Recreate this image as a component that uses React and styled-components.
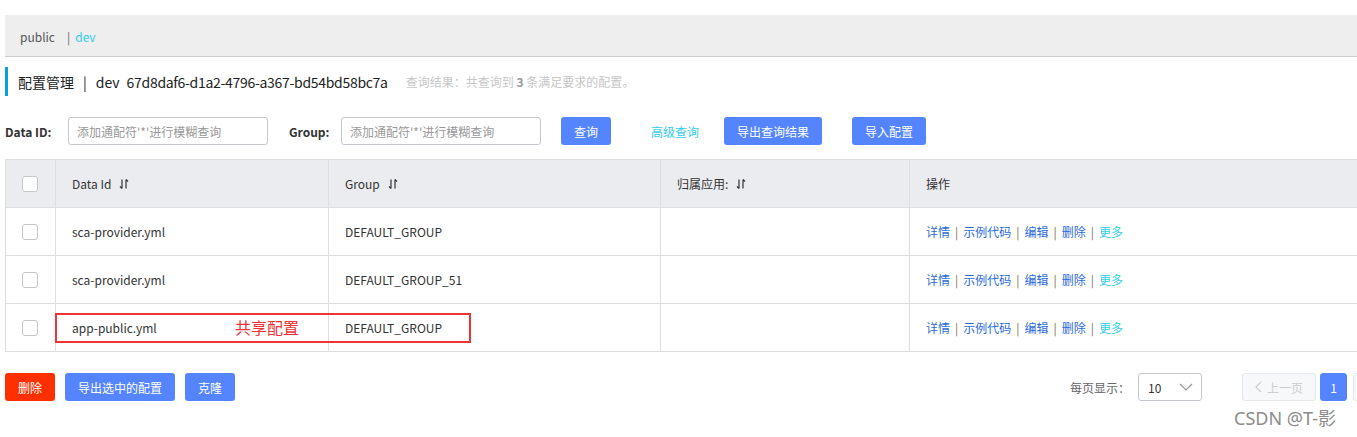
import React from "react";
import styled, { createGlobalStyle } from "styled-components";

const GlobalStyle = createGlobalStyle`
  html, body {
    margin: 0;
    padding: 0;
    background: #fff;
  }
  body {
    font-family: "Noto Sans CJK SC", "Noto Sans", sans-serif;
    font-size: 12px;
    color: #333;
    overflow: hidden;
  }
  * { box-sizing: border-box; }
`;

const colors = {
  primary: "#5584ff",
  cyan: "#33cde5",
  link: "#2a6bd6",
  border: "#dcdee3",
  inputBorder: "#c4c6cf",
  headBg: "#ebecf0",
  danger: "#ff3000",
};

const Viewport = styled.div`
  width: 1357px;
  height: 437px;
  overflow: hidden;
  position: relative;
`;

const Page = styled.div`
  width: 1422px;
  margin-left: 5px;
  padding-top: 15px;
`;

const NamespaceBar = styled.div`
  height: 42px;
  background: #eeeeee;
  border-bottom: 1px solid #cccccc;
  display: flex;
  align-items: center;
  padding-left: 15px;
  padding-top: 2px;
  font-size: 12px;
  line-height: 16px;
`;

const NsItem = styled.span`
  color: ${(p) => (p.active ? colors.cyan : "#555")};
`;

const NsSep = styled.span`
  color: #666;
  margin: 0 5px 0 12px;
`;

const TitleBar = styled.div`
  margin-top: 10px;
  height: 29px;
  border-left: 3px solid #0a9fd6;
  padding-left: 10px;
  display: flex;
  align-items: center;
  font-size: 14px;
  color: #222;
  line-height: 18px;
`;

const TitleSep = styled.span`
  margin: 0 9px;
`;

const NsId = styled.span`
  margin-left: 7px;
  letter-spacing: -0.3px;
`;

const Summary = styled.span`
  margin-left: 18px;
  font-size: 12px;
  color: #c6c6c6;
  strong {
    color: #999;
    font-weight: bold;
  }
`;

const SearchRow = styled.div`
  margin-top: 21px;
  height: 28px;
  display: flex;
  align-items: center;
`;

const FieldLabel = styled.label`
  width: ${(p) => p.w}px;
  flex: none;
  font-weight: bold;
  font-size: 12px;
  color: #333;
  margin-left: ${(p) => p.gap || 0}px;
`;

const TextInput = styled.input`
  width: 200px;
  height: 28px;
  border: 1px solid ${colors.inputBorder};
  border-radius: 3px;
  padding: 0 8px;
  font-family: inherit;
  font-size: 12px;
  outline: none;
  &::placeholder {
    color: #999;
  }
`;

const Button = styled.button`
  height: 28px;
  width: ${(p) => p.w}px;
  margin-left: ${(p) => p.gap || 0}px;
  border: none;
  border-radius: 3px;
  background: ${(p) => p.bg || colors.primary};
  color: #fff;
  font-family: inherit;
  font-size: 12px;
  padding: 0;
  cursor: pointer;
`;

const TextLink = styled.a`
  margin-left: ${(p) => p.gap || 0}px;
  color: ${colors.cyan};
  font-size: 12px;
  cursor: pointer;
`;

const TableWrap = styled.div`
  position: relative;
  margin-top: 14px;
`;

const Table = styled.table`
  width: 1360px;
  border-collapse: collapse;
  table-layout: fixed;
  font-size: 12px;
  th, td {
    border: 1px solid ${colors.border};
    height: 48px;
    padding: 0 16px;
    text-align: left;
    font-weight: normal;
    color: #333;
    white-space: nowrap;
  }
  th {
    background: ${colors.headBg};
  }
`;

const CheckCell = styled.td`
  && { padding: 0 0 0 16px; }
`;

const CheckHead = styled.th`
  && { padding: 0 0 0 16px; }
`;

const Checkbox = styled.span`
  display: block;
  width: 16px;
  height: 16px;
  border: 1px solid ${colors.inputBorder};
  border-radius: 3px;
  background: #fff;
`;

const HeadInner = styled.span`
  display: inline-flex;
  align-items: center;
  gap: 8px;
`;

const SortIcon = () => (
  <svg width="10" height="12" viewBox="0 0 10 12" fill="none" stroke="#333" strokeWidth="1.2">
    <path d="M3 1.5v9M1 8.5l2 2" />
    <path d="M7 10.5v-9M7 1.5l2 2" />
  </svg>
);

const Actions = styled.div`
  display: flex;
  align-items: center;
`;

const ActionLink = styled.a`
  color: ${(p) => (p.more ? colors.cyan : colors.link)};
  cursor: pointer;
`;

const ActionSep = styled.span`
  color: #8a6d4a;
  margin: 0 5px;
`;

const Annotation = styled.div`
  position: absolute;
  left: 50px;
  top: 154px;
  width: 416px;
  height: 30px;
  border: 2px solid #ee3338;
  pointer-events: none;
`;

const AnnotationText = styled.span`
  position: absolute;
  left: 178px;
  top: 2px;
  font-size: 16px;
  line-height: 20px;
  color: #ee3338;
`;

const Footer = styled.div`
  margin-top: 21px;
  height: 28px;
  display: flex;
  align-items: center;
`;

const Spacer = styled.div`
  flex: 1;
`;

const PageSizeLabel = styled.span`
  color: #666;
  margin-right: 8px;
`;

const Select = styled.div`
  width: 64px;
  height: 28px;
  border: 1px solid ${colors.inputBorder};
  border-radius: 3px;
  display: flex;
  align-items: center;
  justify-content: space-between;
  padding: 0 8px 0 9px;
  color: #333;
`;

const PageButton = styled.button`
  height: 28px;
  width: ${(p) => p.w}px;
  margin-left: ${(p) => p.gap || 0}px;
  border: 1px solid ${(p) => (p.current ? colors.primary : "#e6e7eb")};
  border-radius: 3px;
  background: ${(p) => (p.current ? colors.primary : "#f7f8fa")};
  color: ${(p) => (p.current ? "#fff" : "#ccc")};
  font-family: inherit;
  font-size: 12px;
  display: inline-flex;
  align-items: center;
  justify-content: center;
  gap: 5px;
  padding: 0;
`;

const Watermark = styled.div`
  position: absolute;
  left: 1234px;
  top: 407px;
  font-size: 18px;
  line-height: 22px;
  color: #8c8c8c;
  font-family: "Noto Sans", "Noto Sans CJK SC", sans-serif;
`;

const Chevron = ({ dir = "down", color = "#999" }) =>
  dir === "down" ? (
    <svg width="14" height="8" viewBox="0 0 14 8" fill="none" stroke={color} strokeWidth="1.2">
      <path d="M1 1l6 6 6-6" />
    </svg>
  ) : (
    <svg width="7" height="12" viewBox="0 0 7 12" fill="none" stroke={color} strokeWidth="1.2">
      <path d="M6 1L1 6l5 5" />
    </svg>
  );

const rows = [
  { id: "sca-provider.yml", group: "DEFAULT_GROUP" },
  { id: "sca-provider.yml", group: "DEFAULT_GROUP_51" },
  { id: "app-public.yml", group: "DEFAULT_GROUP" },
];

const actions = ["详情", "示例代码", "编辑", "删除"];

export default function App() {
  return (
    <Viewport>
      <GlobalStyle />
      <Page>
        <NamespaceBar>
          <NsItem>public</NsItem>
          <NsSep>|</NsSep>
          <NsItem active>dev</NsItem>
        </NamespaceBar>

        <TitleBar>
          <span>配置管理</span>
          <TitleSep>|</TitleSep>
          <span>dev</span>
          <NsId>67d8daf6-d1a2-4796-a367-bd54bd58bc7a</NsId>
          <Summary>
            查询结果：共查询到 <strong>3</strong> 条满足要求的配置。
          </Summary>
        </TitleBar>

        <SearchRow>
          <FieldLabel w={63}>Data ID:</FieldLabel>
          <TextInput placeholder="添加通配符'*'进行模糊查询" />
          <FieldLabel w={52} gap={21}>Group:</FieldLabel>
          <TextInput placeholder="添加通配符'*'进行模糊查询" />
          <Button w={50} gap={20}>查询</Button>
          <TextLink gap={40}>高级查询</TextLink>
          <Button w={98} gap={25}>导出查询结果</Button>
          <Button w={74} gap={30}>导入配置</Button>
        </SearchRow>

        <TableWrap>
          <Table>
            <colgroup>
              <col style={{ width: 50 }} />
              <col style={{ width: 273 }} />
              <col style={{ width: 332 }} />
              <col style={{ width: 249 }} />
              <col />
            </colgroup>
            <thead>
              <tr>
                <CheckHead><Checkbox /></CheckHead>
                <th><HeadInner>Data Id <SortIcon /></HeadInner></th>
                <th><HeadInner>Group <SortIcon /></HeadInner></th>
                <th><HeadInner>归属应用: <SortIcon /></HeadInner></th>
                <th>操作</th>
              </tr>
            </thead>
            <tbody>
              {rows.map((r, i) => (
                <tr key={i}>
                  <CheckCell><Checkbox /></CheckCell>
                  <td>{r.id}</td>
                  <td>{r.group}</td>
                  <td></td>
                  <td>
                    <Actions>
                      {actions.map((a) => (
                        <React.Fragment key={a}>
                          <ActionLink>{a}</ActionLink>
                          <ActionSep>|</ActionSep>
                        </React.Fragment>
                      ))}
                      <ActionLink more>更多</ActionLink>
                    </Actions>
                  </td>
                </tr>
              ))}
            </tbody>
          </Table>
          <Annotation>
            <AnnotationText>共享配置</AnnotationText>
          </Annotation>
        </TableWrap>

        <Footer>
          <Button w={50} bg={colors.danger}>删除</Button>
          <Button w={110} gap={10}>导出选中的配置</Button>
          <Button w={50} gap={10}>克隆</Button>
          <Spacer />
          <PageSizeLabel>每页显示：</PageSizeLabel>
          <Select>
            <span>10</span>
            <Chevron />
          </Select>
          <PageButton w={74} gap={40}>
            <Chevron dir="left" color="#ccc" />
            上一页
          </PageButton>
          <PageButton w={27} gap={4} current>1</PageButton>
          <PageButton w={74} gap={6}>下一页</PageButton>
        </Footer>
      </Page>
      <Watermark>CSDN @T-影</Watermark>
    </Viewport>
  );
}
